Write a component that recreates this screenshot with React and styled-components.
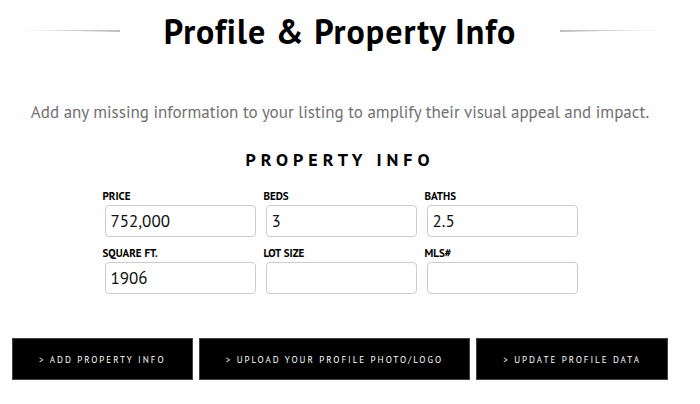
// Import dependencies
import React, { useState } from 'react'
import styled, { createGlobalStyle } from 'styled-components'

// Global styles
const GlobalStyle = createGlobalStyle`
* {
  margin: 0;
  padding: 0;
  box-sizing: border-box;
}

body {
  color: #000;
  background-color: #fefefe;
  font-family: 'PT Sans', 'Noto Sans', sans-serif;
}

button, input { font-family: inherit; }
`

// Styled components
const Page = styled.main`
  display: flex;
  align-items: center;
  flex-direction: column;
  padding: 8px 32px 24px 12px;
`

const Header = styled.header`
  gap: 44px;
  width: 100%;
  display: flex;
  align-items: center;
  justify-content: center;
`

const Title = styled.h1`
  font-size: 34px;
  font-weight: 700;
  line-height: 46px;
  white-space: nowrap;
  letter-spacing: 1px;
`

const Rule = styled.svg`
  width: 100px;
  height: 3px;
  display: block;
  flex-shrink: 0;
`

const Intro = styled.p`
  color: #707070;
  font-size: 17px;
  margin-top: 46px;
  line-height: 24px;
  text-align: center;
`

const Subtitle = styled.h2`
  font-size: 18px;
  font-weight: 700;
  margin-top: 24px;
  line-height: 24px;
  letter-spacing: 5px;
  text-transform: uppercase;
`

const Fields = styled.form`
  gap: 8px;
  width: 100%;
  display: grid;
  max-width: 475px;
  margin-top: 16px;
  grid-template-columns: repeat(3, minmax(0, 1fr));
`

const Field = styled.div`
  display: flex;
  flex-direction: column;

  label {
    font-size: 11px;
    font-weight: 700;
    line-height: 17px;
    text-transform: uppercase;
  }

  input {
    height: 32px;
    min-width: 0;
    color: #111;
    padding: 0 5px;
    font-size: 17px;
    margin-left: 2px;
    border-radius: 4px;
    background-color: #fff;
    border: 1px solid #ccc;
  }
`

const Actions = styled.div`
  gap: 6px;
  width: 100%;
  display: flex;
  margin-top: 44px;
`

const ActionButton = styled.button`
  flex: 1 1 auto;
  height: 42px;
  color: #fff;
  font-size: 9px;
  cursor: pointer;
  white-space: nowrap;
  letter-spacing: 2px;
  background-color: #000;
  border: 1px solid #444;
  text-transform: uppercase;
`

// Variables
const fields = [
  { id: 'price', label: 'Price', value: '752,000' },
  { id: 'beds', label: 'Beds', value: '3' },
  { id: 'baths', label: 'Baths', value: '2.5' },
  { id: 'sqft', label: 'Square Ft.', value: '1906' },
  { id: 'lot', label: 'Lot Size', value: '' },
  { id: 'mls', label: 'MLS#', value: '' },
]

const actions = ['Add Property Info', 'Upload Your Profile Photo/Logo', 'Update Profile Data']

// Tapered line, thick end towards the title
function TitleRule({ side }) {
  const left = side === 'left'
  return (
    <Rule viewBox="0 0 100 3" preserveAspectRatio="none" aria-hidden="true">
      <defs>
        <linearGradient id={`rule-${side}`} x1={left ? 0 : 1} x2={left ? 1 : 0}>
          <stop offset="0" stopColor="#bbb" stopOpacity="0.3" />
          <stop offset="1" stopColor="#bbb" />
        </linearGradient>
      </defs>
      <path d={left ? 'M0 0L100 0V2Z' : 'M100 0L0 0V2Z'} fill={`url(#rule-${side})`} />
    </Rule>
  )
}

// Profile page
function App() {
  const [values, setValues] = useState(
    Object.fromEntries(fields.map(({ id, value }) => [id, value]))
  )

  return (
    <>
      <GlobalStyle />
      <Page>
        <Header>
          <TitleRule side="left" />
          <Title>Profile &amp; Property Info</Title>
          <TitleRule side="right" />
        </Header>
        <Intro>Add any missing information to your listing to amplify their visual appeal and impact.</Intro>
        <Subtitle>Property Info</Subtitle>
        <Fields>
          {fields.map(({ id, label }) => (
            <Field key={id}>
              <label htmlFor={id}>{label}</label>
              <input id={id}
                     type="text"
                     value={values[id]}
                     onChange={(e) => setValues({ ...values, [id]: e.target.value })} />
            </Field>
          ))}
        </Fields>
        <Actions>
          {actions.map((action) => (
            <ActionButton key={action} type="button">&gt; {action}</ActionButton>
          ))}
        </Actions>
      </Page>
    </>
  )
}

export default App
